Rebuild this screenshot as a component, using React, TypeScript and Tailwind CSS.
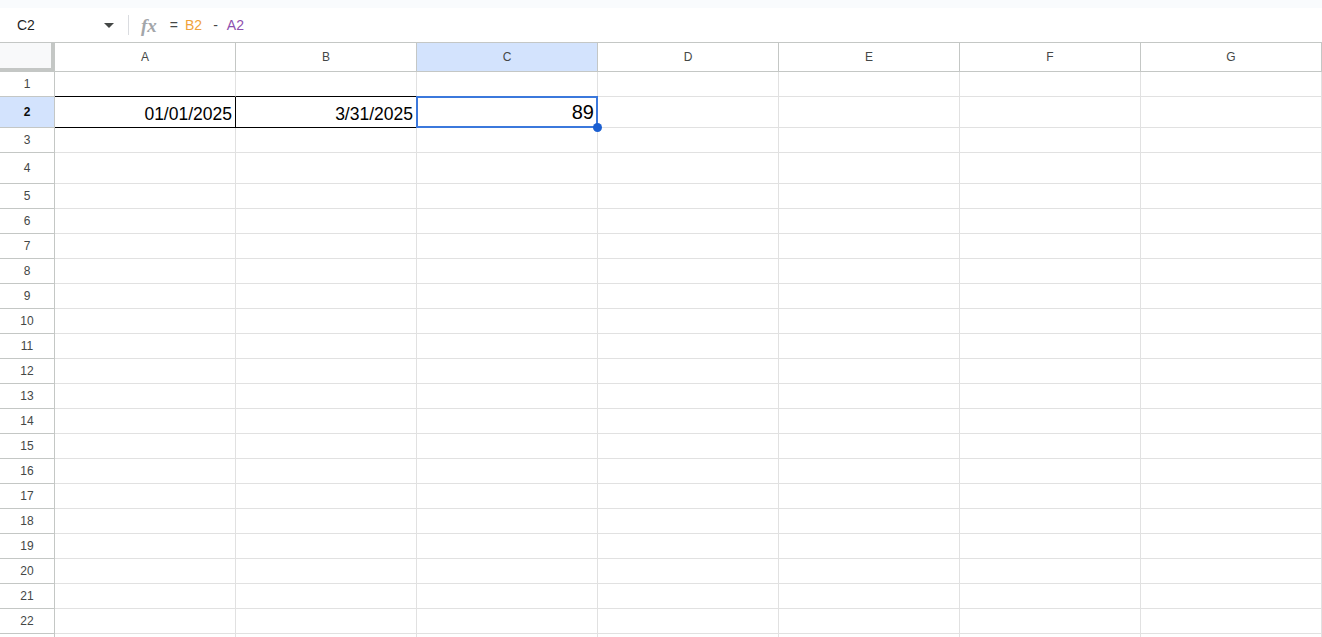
const COLS = ["A", "B", "C", "D", "E", "F", "G"];
const ROW_HEIGHTS: Record<number, string> = { 2: "h-[31px]", 4: "h-[31px]" };
const ROWS = Array.from({ length: 23 }, (_, i) => i + 1);

function FormulaBar() {
  return (
    <div className="flex h-[34px] items-center bg-white">
      <div className="flex w-[128px] items-center pl-[17px] pr-[14px]">
        <span className="text-[14px] text-[#1f1f1f]">C2</span>
        <svg className="ml-auto" width="10" height="5" viewBox="0 0 10 5">
          <path d="M0 0h10L5 5z" fill="#444746" />
        </svg>
      </div>
      <div className="h-[20px] w-px bg-[#dadce0]" />
      <span className="ml-[12px] font-['Liberation_Serif',serif] text-[19px] font-semibold italic leading-none text-[#a3a6aa]">fx</span>
      <div className="ml-[13px] flex items-center text-[14px]">
        <span className="text-[#444746]">=</span>
        <span className="ml-[7px] text-[#f0a33c]">B2</span>
        <span className="ml-[11px] text-[#444746]">-</span>
        <span className="ml-[9px] text-[#8e4fae]">A2</span>
      </div>
    </div>
  );
}

function HeaderRow() {
  return (
    <div className="flex h-[30px] border-t border-[#c4c7c5]">
      <div className="box-border w-[55px] border-b-4 border-r-4 border-[#c4c7c5] bg-[#f8f9fa]" />
      {COLS.map((c) => (
        <div
          key={c}
          className={`flex w-[181px] items-center justify-center border-b border-r border-[#c4c7c5] text-[12px] text-[#444746] ${
            c === "C" ? "bg-[#d3e3fd] text-[#0b0b0b]" : "bg-white"
          }`}
        >
          {c}
        </div>
      ))}
    </div>
  );
}

function Cell({ row, col }: { row: number; col: string }) {
  const boxed = col === "A" || col === "B";
  const selected = row === 2 && col === "C";
  let border = "border-[#e1e1e1]";
  if (row === 1 && boxed) border = "border-r-[#e1e1e1] border-b-black";
  if (row === 2 && boxed) border = "border-black";

  let value = "";
  if (row === 2 && col === "A") value = "01/01/2025";
  if (row === 2 && col === "B") value = "3/31/2025";
  if (selected) value = "89";

  return (
    <div
      className={`relative flex w-[181px] items-end justify-end border-b border-r pb-[3px] pr-[3px] text-black ${border} ${
        col === "C" ? "text-[20px] leading-[24px]" : "text-[17.5px] leading-[20px]"
      } ${selected ? "z-10" : ""}`}
    >
      {value}
      {selected && (
        <>
          <div className="pointer-events-none absolute -bottom-px -left-px -right-px -top-px border-2 border-[#3b78dc]" />
          <div className="absolute -bottom-[5px] -right-[5px] h-[9px] w-[9px] rounded-full bg-[#1b5fd1]" />
        </>
      )}
    </div>
  );
}

export default function App() {
  return (
    <div className="h-[637px] w-[1322px] overflow-hidden bg-white font-['Liberation_Sans',Arial,sans-serif]">
      <div className="h-[8px] bg-[#f9fbfd]" />
      <FormulaBar />
      <HeaderRow />
      {ROWS.map((r) => (
        <div key={r} className={`flex ${ROW_HEIGHTS[r] ?? "h-[25px]"}`}>
          <div
            className={`flex w-[55px] items-center justify-center border-b border-r border-[#c4c7c5] text-[12px] ${
              r === 2 ? "bg-[#d3e3fd] font-bold text-[#0b0b0b]" : "bg-white text-[#444746]"
            }`}
          >
            {r < 23 ? r : ""}
          </div>
          {COLS.map((c) => (
            <Cell key={c} row={r} col={c} />
          ))}
        </div>
      ))}
    </div>
  );
}
